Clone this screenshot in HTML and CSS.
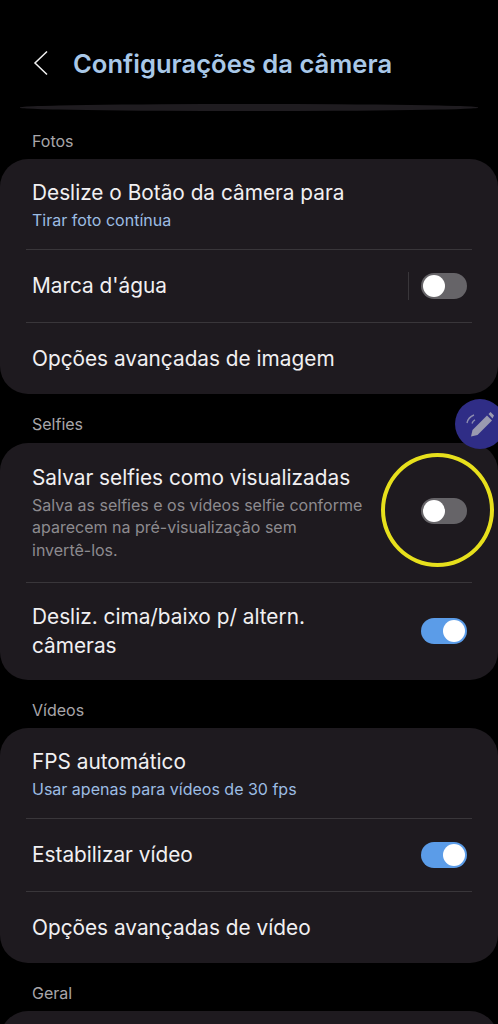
FILE: index.html
```html
<!DOCTYPE html>
<html lang="pt">
<head>
<meta charset="utf-8">
<title>Configurações da câmera</title>
<link rel="stylesheet" href="styles.css">
</head>
<body>
<div class="screen">
  <header class="header">
    <svg class="back" width="16" height="26" viewBox="0 0 16 26"><path d="M14 1.500 2 13l12 11.500" fill="none" stroke="#f2f2f2" stroke-width="1.500"/></svg>
    <h1 class="title">Configurações da câmera</h1>
  </header>
  <div class="sliver"></div>

  <h2 class="section">Fotos</h2>
  <section class="card">
    <div class="row tall"><div class="text"><div class="label">Deslize o Botão da câmera para</div><div class="value">Tirar foto contínua</div></div></div>
    <div class="row"><div class="text"><div class="label">Marca d'água</div></div><span class="vline"></span><span class="switch"><span class="knob"></span></span></div>
    <div class="row last"><div class="text"><div class="label">Opções avançadas de imagem</div></div></div>
  </section>

  <h2 class="section wide">Selfies</h2>
  <section class="card">
    <div class="row selfie"><div class="text"><div class="label">Salvar selfies como visualizadas</div><div class="desc">Salva as selfies e os vídeos selfie conforme aparecem na pré-visualização sem <span class="nobreak">invertê-los.</span></div></div><span class="switch"><span class="knob"></span></span></div>
    <div class="row swipe"><div class="text"><div class="label two">Desliz. cima/baixo p/ altern. câmeras</div></div><span class="switch on"><span class="knob"></span></span></div>
  </section>

  <h2 class="section">Vídeos</h2>
  <section class="card">
    <div class="row tall"><div class="text"><div class="label">FPS automático</div><div class="value">Usar apenas para vídeos de 30 fps</div></div></div>
    <div class="row"><div class="text"><div class="label">Estabilizar vídeo</div></div><span class="switch on"><span class="knob"></span></span></div>
    <div class="row last"><div class="text"><div class="label">Opções avançadas de vídeo</div></div></div>
  </section>

  <h2 class="section">Geral</h2>
  <section class="card stub"></section>

  <div class="ring"></div>
  <div class="fab">
    <svg width="36" height="36" viewBox="0 0 36 36" fill="none">
      <path d="M9 30.500 10.500 24 25 9.500 30 14.500 15.500 29Z" fill="#9a9ab0"/>
      <path d="M26.500 8 28.500 6 32 9.500 30.500 12.500Z" fill="#9a9ab0"/>
      <path d="M5 17c.8-4 3-6.500 7-8" stroke="#8d8db0" stroke-width="1.400"/>
      <path d="M10 17.500c.5-1.800 1.400-2.900 3-3.700" stroke="#8d8db0" stroke-width="1.400"/>
    </svg>
  </div>
</div>
</body>
</html>
```
FILE: styles.css
```css
* { box-sizing: border-box; }
html, body { margin: 0; padding: 0; background: #000; }
.screen {
  position: relative;
  width: 498px;
  height: 1024px;
  overflow: hidden;
  background: #000;
  font-family: Inter, "Noto Sans", sans-serif;
  color: #f1f0f2;
}
.header {
  display: flex;
  align-items: center;
  height: 104px;
  padding: 22px 0 0 33px;
  gap: 24px;
}
.back { flex: none; }
.title {
  margin: 0;
  font-size: 25.6px;
  font-weight: 600;
  color: #a9c8e8;
  white-space: nowrap;
}
.sliver {
  height: 6.7px;
  margin: 0 20px;
  background: #1f1c20;
  border-radius: 50%;
}
.section {
  height: 48px;
  margin: 0;
  padding: 20px 0 0 32px;
  font-size: 16px;
  line-height: 20px;
  font-weight: 400;
  color: #a8a6aa;
}
.section.wide { height: 49px; }
.card {
  background: #1e1a1f;
  border-radius: 28px;
}
.row {
  position: relative;
  display: flex;
  align-items: center;
  height: 73px;
  padding: 0 31px 0 32px;
}
.row::after {
  content: "";
  position: absolute;
  left: 26px;
  right: 26px;
  bottom: 0;
  height: 1px;
  background: #39363a;
}
.row.last::after, .row.swipe::after { display: none; }
.row.tall { height: 91px; padding-top: 1px; }
.row.last { height: 71px; padding-top: 1px; }
.row.selfie { height: 140px; align-items: flex-start; padding-top: 21px; }
.row.selfie .switch { margin-top: 34px; }
.row.swipe { height: 97px; }
.text { flex: 1; min-width: 0; }
.label { font-size: 20.8px; line-height: 28px; font-weight: 400; white-space: nowrap; }
.label.two { white-space: normal; width: 330px; line-height: 29px; }
.value { font-size: 16px; line-height: 20px; margin-top: 3px; color: #9cbde3; }
.desc { width: 338px; font-size: 16px; line-height: 22.5px; margin-top: 2px; color: #8d8b8f; }
.nobreak { white-space: nowrap; }
.vline { width: 1px; height: 28px; margin-right: 12px; background: #39363a; }
.switch {
  flex: none;
  display: flex;
  align-items: center;
  width: 46px;
  height: 26px;
  padding: 0 2px;
  border-radius: 13px;
  background: #666468;
}
.switch.on { justify-content: flex-end; background: #5b9ce8; }
.knob { width: 22px; height: 22px; border-radius: 50%; background: #fff; }
.card.stub { height: 60px; }
.ring {
  position: absolute;
  left: 381px;
  top: 453px;
  width: 113px;
  height: 114px;
  border: 4px solid #e7e01c;
  border-radius: 50%;
}
.fab {
  position: absolute;
  left: 455px;
  top: 399px;
  width: 50px;
  height: 50px;
  display: flex;
  align-items: center;
  justify-content: center;
  border-radius: 50%;
  background: #2f2d86;
}
```
